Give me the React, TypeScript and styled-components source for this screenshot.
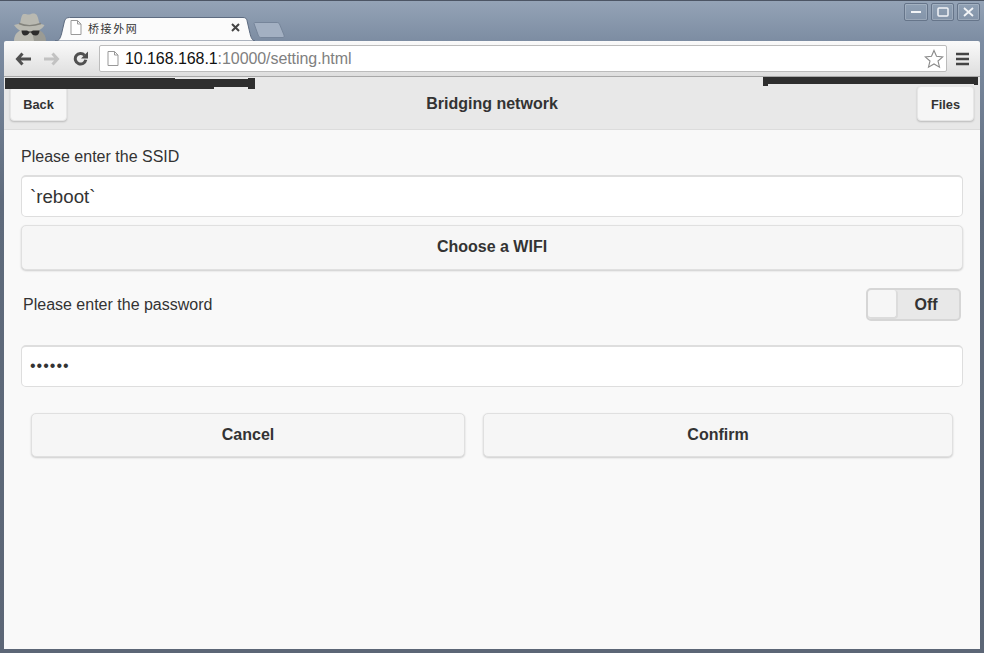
import React from 'react'
import styled, { createGlobalStyle } from 'styled-components'

const Global = createGlobalStyle`
  html, body { margin: 0; padding: 0; }
  body { font-family: "Liberation Sans", Arial, sans-serif; color: #333; }
`

const Win = styled.div`
  position: relative;
  width: 984px;
  height: 653px;
  box-sizing: border-box;
  padding: 0 4px 4px 4px;
  display: flex;
  flex-direction: column;
  background: linear-gradient(#94a3b6 0, #7c8ca2 41px, #5f6b7c 200px, #5c6676 100%);
  border-top: 1px solid #4c5564;
  overflow: hidden;
`

const TabStrip = styled.div`
  position: relative;
  height: 40px;
  flex: none;
  display: flex;
  align-items: flex-end;
  padding-left: 51px;
`

const Spy = styled.svg`
  position: absolute;
  left: 6px;
  top: 12px;
`

const Tab = styled.div`
  position: relative;
  width: 200px;
  height: 24px;
  display: flex;
  align-items: center;
  padding: 0 15px 3px 15px;
  box-sizing: border-box;
  font-family: "Noto Sans CJK SC", sans-serif;
  font-size: 11px;
  letter-spacing: 1.6px;
  color: #333;
  gap: 6px;
`

const TabShape = styled.svg`
  position: absolute;
  left: 0;
  top: 0;
`

const TabTitle = styled.span`
  position: relative;
  flex: 1;
`

const TabClose = styled.svg`
  position: relative;
`

const NewTab = styled.svg`
  margin-bottom: 3px;
  margin-left: -2px;
`

const WinButtons = styled.div`
  position: absolute;
  right: 0;
  top: 2px;
  display: flex;
  gap: 3px;
`

const WinButton = styled.div<{ $w: number }>`
  width: ${p => p.$w}px;
  height: 18px;
  box-sizing: border-box;
  border: 1px solid #66758a;
  border-radius: 2px;
  background: linear-gradient(#8fa0b4, #8494a9);
  box-shadow: inset 0 0 0 1px rgba(255, 255, 255, 0.18);
  display: flex;
  align-items: center;
  justify-content: center;
`

const Toolbar = styled.div`
  height: 36px;
  flex: none;
  box-sizing: border-box;
  display: flex;
  align-items: center;
  padding: 0 11px 0 11px;
  background: linear-gradient(#fafafa, #dedede);
  border-radius: 2px 2px 0 0;
  border-bottom: 1px solid #a8a8a8;
`

const NavIcon = styled.svg`
  flex: none;
  margin-right: 13px;
`

const Omnibox = styled.div`
  flex: 1;
  height: 27px;
  margin-left: -2px;
  box-sizing: border-box;
  background: #fff;
  border: 1px solid #bcbcbc;
  border-radius: 2px;
  display: flex;
  align-items: center;
  padding: 0 2px 0 7px;
  font-size: 16px;
  letter-spacing: -0.07px;
`

const Host = styled.span`
  color: #111;
  margin-left: 6px;
`

const Rest = styled.span`
  color: #808080;
  flex: 1;
`

const MenuIcon = styled.svg`
  margin-left: 9px;
  flex: none;
`

const Page = styled.div`
  flex: 1;
  background: #f9f9f9;
  display: flex;
  flex-direction: column;
`

const Header = styled.div`
  height: 53px;
  flex: none;
  box-sizing: border-box;
  background: #e8e8e8;
  border-bottom: 1px solid #dcdcdc;
  display: flex;
  align-items: center;
  justify-content: space-between;
  padding: 1px 6px 0 6px;
  position: relative;
`

const Title = styled.h1`
  position: absolute;
  left: 0;
  right: 0;
  top: 18px;
  margin: 0;
  text-align: center;
  font-size: 16px;
  line-height: 18px;
  font-weight: bold;
  color: #333;
`

const HeaderButton = styled.div`
  width: 57px;
  height: 35px;
  box-sizing: border-box;
  padding-top: 2px;
  background: #f6f6f6;
  border: 1px solid #e6e6e6;
  border-radius: 4px;
  box-shadow: 0 1px 2px rgba(0, 0, 0, 0.2);
  display: flex;
  align-items: center;
  justify-content: center;
  font-size: 12.8px;
  font-weight: bold;
  color: #333;
`

const Redaction = styled.div<{ $l: number; $t: number; $w: number; $h: number }>`
  position: absolute;
  left: ${p => p.$l}px;
  top: ${p => p.$t}px;
  width: ${p => p.$w}px;
  height: ${p => p.$h}px;
  background: #2e2e2e;
`

const Form = styled.div`
  padding: 0 17px;
  display: flex;
  flex-direction: column;
`

const Label = styled.div`
  margin-top: 18px;
  font-size: 16px;
  line-height: 18px;
  color: #333;
`

const Field = styled.div<{ $size: number; $gap: number; $spacing: number; $lift: number }>`
  height: 42px;
  margin-top: ${p => p.$gap}px;
  box-sizing: border-box;
  padding: ${p => (p.$lift < 0 ? 2 : 0)}px 0 ${p => (p.$lift > 0 ? 2 : 0)}px 8px;
  background: #fff;
  border: 1px solid #dedede;
  border-top: 2px solid #dedede;
  border-radius: 5px;
  display: flex;
  align-items: center;
  font-size: ${p => p.$size}px;
  letter-spacing: ${p => p.$spacing}px;
  color: #333;
`

const WideButton = styled.div<{ $h: number; $lift?: number }>`
  flex: 1;
  height: ${p => p.$h}px;
  box-sizing: border-box;
  padding-bottom: ${p => p.$lift ?? 0}px;
  background: #f6f6f6;
  border: 1px solid #e0e0e0;
  border-radius: 5px;
  box-shadow: 0 1px 2px rgba(0, 0, 0, 0.18);
  display: flex;
  align-items: center;
  justify-content: center;
  font-size: 16px;
  font-weight: bold;
  color: #333;
`

const ChooseRow = styled.div`
  margin-top: 8px;
  display: flex;
`

const PasswordRow = styled.div`
  margin-top: 18px;
  padding: 0 2px;
  height: 33px;
  display: flex;
  align-items: center;
  justify-content: space-between;
  font-size: 16px;
  color: #333;
`

const Toggle = styled.div`
  width: 95px;
  height: 33px;
  box-sizing: border-box;
  background: #e8e8e8;
  border: 2px solid #d6d6d6;
  border-radius: 5px;
  display: flex;
  align-items: center;
  font-size: 16px;
  font-weight: bold;
`

const Knob = styled.div`
  width: 30px;
  height: 29px;
  box-sizing: border-box;
  background: #f6f6f6;
  border-right: 2px solid #dcdcdc;
  border-bottom: 2px solid #dcdcdc;
  border-radius: 4px;
`

const ToggleText = styled.span`
  flex: 1;
  text-align: center;
  padding-right: 5px;
`

const Actions = styled.div`
  margin-top: 26px;
  padding: 0 10px;
  display: flex;
  gap: 18px;
`

const CancelSlot = styled.div`
  width: 434px;
  flex: none;
  display: flex;
`

const PageGlyph = styled.svg`
  position: relative;
  flex: none;
`

const Star = styled.svg`
  flex: none;
`

export default function App() {
  return (
    <>
      <Global />
      <Win>
        <TabStrip>
          <Spy width="40" height="28" viewBox="0 0 40 28">
            <path d="M4 28c0-5 2-8 6-10.500C7 16 5 13.500 4 12l6-1.500c1-3 1-8.500 3.500-9.500 2.500-.5 4 1 6 .5s3.500-1.500 6-.5c2.500 1 3 6.500 4 9.500l5 1.500c-1 2-3 4-6 5.500 4 2.500 6 6 6 10.500z" fill="#b9b9b1" />
            <path d="M22 18l2 10h12c0-4.500-2-8-6-10.500z" fill="#9b9b94" />
            <path d="M9 10.500c6 2.500 15 2.500 22 0" stroke="#83837c" strokeWidth="1.400" fill="none" />
            <path d="M11 17.500h6l2 1h2l2-1h6.500c0 3-1.500 5-4 5s-3.500-1-4.500-3h-1.500c-1 2-2.500 3-4.500 3s-3.500-2-3.500-5z" fill="#2c2c2c" />
          </Spy>
          <Tab>
            <TabShape width="200" height="24" viewBox="0 0 200 24">
              <path d="M0 24c4 0 5-2 6.500-7L9.500 4c1-2.500 2.500-3.500 5-3.500h173.500c2.500 0 3.500 1 4 3l3 13c1 4 2 7 5 7.500z" fill="#fbfbfb" stroke="#5d6b80" strokeWidth="1" />
            </TabShape>
            <PageGlyph width="12" height="15" viewBox="0 0 12 15">
              <path d="M1 .500h6.500L11 4v10.500H1z M7.500 .500V4H11" fill="#fff" stroke="#999" strokeWidth="1" />
            </PageGlyph>
            <TabTitle>桥接外网</TabTitle>
            <TabClose width="9" height="9" viewBox="0 0 9 9">
              <path d="M1 1l7 7M8 1L1 8" stroke="#444" strokeWidth="2" />
            </TabClose>
          </Tab>
          <NewTab width="33" height="16" viewBox="0 0 33 16">
            <path d="M1 1.500c0-.5.500-1 1-1h22c1 0 2 .5 2.500 1.500L31 13c.5 1.500 0 2.500-1 2.500H8c-1 0-2-.5-2.500-1.500z" fill="#a3b0c2" stroke="#76859a" />
          </NewTab>
          <WinButtons>
            <WinButton $w={24}>
              <svg width="12" height="4" viewBox="0 0 12 4"><rect x="1" y="1" width="10" height="2" fill="#f2f4f7" /></svg>
            </WinButton>
            <WinButton $w={23}>
              <svg width="12" height="10" viewBox="0 0 12 10"><rect x="1" y="1" width="10" height="8" rx="1" fill="none" stroke="#f2f4f7" strokeWidth="1.500" /></svg>
            </WinButton>
            <WinButton $w={23}>
              <svg width="11" height="10" viewBox="0 0 11 10"><path d="M1 1l9 8M10 1L1 9" stroke="#f2f4f7" strokeWidth="1.800" /></svg>
            </WinButton>
          </WinButtons>
        </TabStrip>

        <Toolbar>
          <NavIcon width="16" height="14" viewBox="0 0 16 14">
            <path d="M7.500 1.500L2.500 7l5 5.500M3 7h13" stroke="#505050" strokeWidth="3" fill="none" />
          </NavIcon>
          <NavIcon width="16" height="14" viewBox="0 0 16 14">
            <path d="M8.500 1.500l5 5.500-5 5.500M13 7H0" stroke="#c2c2c2" strokeWidth="3" fill="none" />
          </NavIcon>
          <NavIcon width="15" height="15" viewBox="0 0 15 15">
            <path d="M11.500 4.200A5.300 5.300 0 1 0 12.800 8.800" stroke="#505050" strokeWidth="3" fill="none" />
            <path d="M15 .500V7.500H8z" fill="#505050" />
          </NavIcon>
          <Omnibox>
            <PageGlyph width="12" height="15" viewBox="0 0 12 15">
              <path d="M1 .500h6.500L11 4v10.500H1z M7.500 .500V4H11" fill="#fff" stroke="#999" strokeWidth="1" />
            </PageGlyph>
            <Host>10.168.168.1</Host>
            <Rest>:10000/setting.html</Rest>
            <Star width="20" height="20" viewBox="0 0 20 20">
              <path d="M10 1.500l2.500 5.800 6.300.6-4.800 4.100 1.500 6.200L10 15l-5.500 3.200L6 12 1.200 7.900l6.300-.6z" fill="#fff" stroke="#8a8a8a" strokeWidth="1.100" />
            </Star>
          </Omnibox>
          <MenuIcon width="13" height="14" viewBox="0 0 13 14">
            <path d="M0 2h13M0 7h13M0 12h13" stroke="#444" strokeWidth="2.500" />
          </MenuIcon>
        </Toolbar>

        <Page>
          <Header>
            <HeaderButton>Back</HeaderButton>
            <Title>Bridging network</Title>
            <HeaderButton>Files</HeaderButton>
          </Header>
          <Form>
            <Label>Please enter the SSID</Label>
            <Field $size={18.7} $gap={9} $spacing={0} $lift={0}>`reboot`</Field>
            <ChooseRow>
              <WideButton $h={45} $lift={2}>Choose a WIFI</WideButton>
            </ChooseRow>
            <PasswordRow>
              <span>Please enter the password</span>
              <Toggle>
                <Knob />
                <ToggleText>Off</ToggleText>
              </Toggle>
            </PasswordRow>
            <Field $size={16} $gap={24} $spacing={1} $lift={2}>••••••</Field>
            <Actions>
              <CancelSlot>
                <WideButton $h={44}>Cancel</WideButton>
              </CancelSlot>
              <WideButton $h={44}>Confirm</WideButton>
            </Actions>
          </Form>
        </Page>

        <Redaction $l={5} $t={77} $w={170} $h={11} />
        <Redaction $l={175} $t={78} $w={39} $h={10} />
        <Redaction $l={214} $t={78} $w={34} $h={8} />
        <Redaction $l={248} $t={77} $w={7} $h={11} />
        <Redaction $l={763} $t={76} $w={215} $h={7} />
        <Redaction $l={763} $t={83} $w={5} $h={2} />
        <Redaction $l={974} $t={83} $w={4} $h={1} />
      </Win>
    </>
  )
}
